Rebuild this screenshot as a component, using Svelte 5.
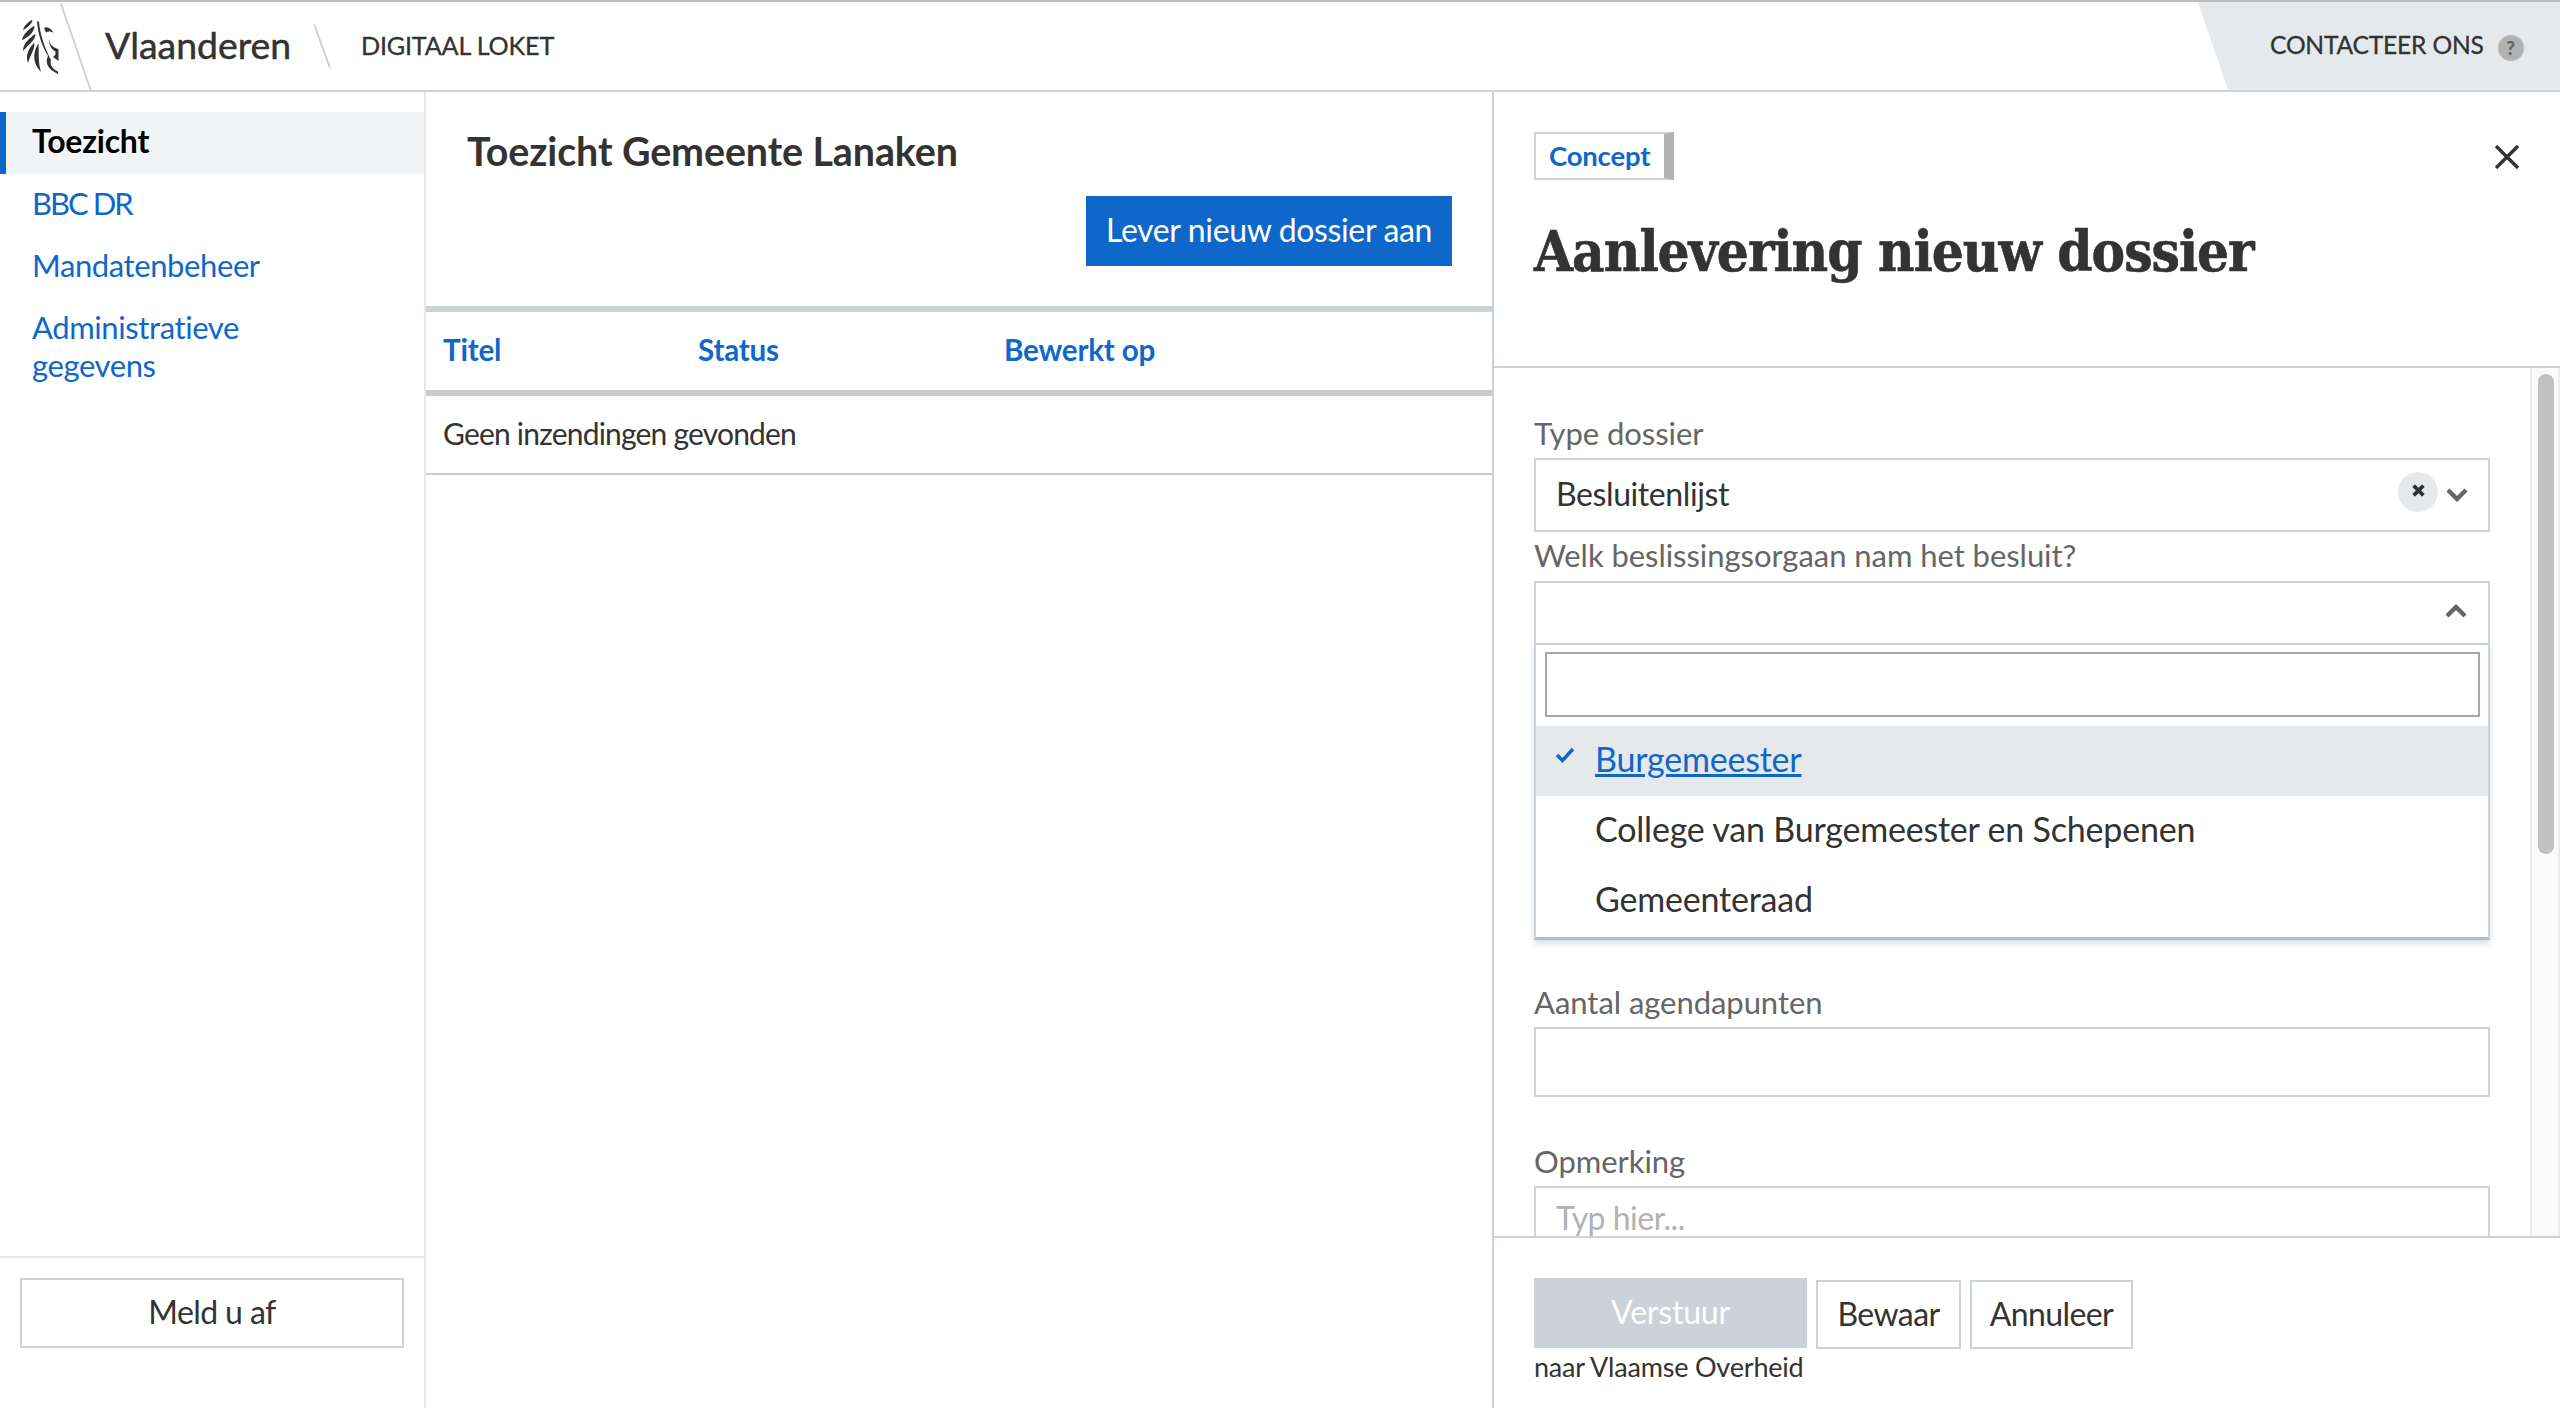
<script>
  const navItems = ["BBC DR", "Mandatenbeheer", "Administratieve gegevens"];
  const columns = ["Titel", "Status", "Bewerkt op"];
  const options = ["College van Burgemeester en Schepenen", "Gemeenteraad"];
</script>

<div class="page">
  <header class="topbar">
    <div class="brand">
      <svg class="lion" viewBox="0 0 50 66" aria-hidden="true">
        <path d="M18 6C14 8 10 12 9 16C13 14 17 11 18.5 7Z" />
        <path d="M20 12C15 15 9 20 8 26C13 24 19 20 20.5 13Z" />
        <path d="M21 20C16 24 9 29 9 37C13 32 20 28 21.5 21Z" />
        <path d="M20 29C15 34 11 41 14 49C16 42 20 37 20.5 30Z" />
        <path d="M24 30C19 38 18 49 27 58C24 48 25 39 24.5 30Z" />
        <path d="M23 7C24 22 29 34 34 42C31 48 33 55 44 60L44 57.5C38 55 35.5 50 37 46C31 35 26 20 25 8Z" />
        <path d="M30 14C33 12 37 14 39.5 19C37 17 34 17 32 18.5Z" />
        <path d="M35 25C36 31 39 33.5 44.5 35L44.5 47L39 43L41.5 40.5L41.5 37.5C37.5 35.5 35 31 35 25Z" />
      </svg>
    </div>
    <span class="wordmark">Vlaanderen</span>
    <span class="slash"></span>
    <span class="app-name">DIGITAAL LOKET</span>
    <div class="contact">
      <span>CONTACTEER ONS</span>
      <span class="help">?</span>
    </div>
  </header>

  <div class="body">
    <nav class="sidebar">
      <ul>
        <li class="active">Toezicht</li>
        {#each navItems as item}
          <li class:caps={item === "BBC DR"}>{item}</li>
        {/each}
      </ul>
      <div class="logout">
        <button class="btn-outline wide">Meld u af</button>
      </div>
    </nav>

    <main class="main">
      <div class="main-head">
        <h2>Toezicht Gemeente Lanaken</h2>
        <button class="btn-primary">Lever nieuw dossier aan</button>
      </div>
      <div class="table-head">
        {#each columns as col}
          <span>{col}</span>
        {/each}
      </div>
      <div class="table-row">Geen inzendingen gevonden</div>
    </main>

    <aside class="panel">
      <div class="panel-head">
        <div class="head-top">
          <span class="tag">Concept</span>
          <svg class="close" viewBox="0 0 24 24" aria-hidden="true"><path d="M1 1L23 23M23 1L1 23" /></svg>
        </div>
        <h1>Aanlevering nieuw dossier</h1>
      </div>

      <div class="panel-scroll">
        <form class="form">
          <label class="first" for="type">Type dossier</label>
          <div class="select" id="type">
            <span>Besluitenlijst</span>
            <span class="clear">
              <svg viewBox="0 0 12 12" aria-hidden="true"><path d="M1.5 1.5L10.5 10.5M10.5 1.5L1.5 10.5" /></svg>
            </span>
            <svg class="chev" viewBox="0 0 22 14" aria-hidden="true"><path d="M2 2L11 11L20 2" /></svg>
          </div>

          <label class="tight" for="organ">Welk beslissingsorgaan nam het besluit?</label>
          <div class="combo">
            <div class="select open" id="organ">
              <svg class="chev up" viewBox="0 0 22 14" aria-hidden="true"><path d="M2 12L11 3L20 12" /></svg>
            </div>
            <div class="dropdown">
              <div class="search-wrap"><div class="search"></div></div>
              <div class="option selected">
                <svg class="check" viewBox="0 0 20 16" aria-hidden="true"><path d="M2 8L7.5 13.5L18 2" /></svg>
                <span>Burgemeester</span>
              </div>
              {#each options as opt}
                <div class="option">{opt}</div>
              {/each}
            </div>
          </div>

          <label class="after-combo" for="count">Aantal agendapunten</label>
          <div class="input" id="count"></div>

          <label class="spaced" for="note">Opmerking</label>
          <div class="input note" id="note">Typ hier...</div>
        </form>
        <div class="track"><div class="thumb"></div></div>
      </div>

      <div class="panel-foot">
        <div class="send">
          <button class="btn-disabled">Verstuur</button>
          <span>naar Vlaamse Overheid</span>
        </div>
        <button class="btn-outline save">Bewaar</button>
        <button class="btn-outline cancel">Annuleer</button>
      </div>
    </aside>
  </div>
</div>

<style>
  :global(body) {
    margin: 0;
    background: #fff;
  }

  .page {
    width: 2560px;
    height: 1408px;
    overflow: hidden;
    display: flex;
    flex-direction: column;
    font-family: Lato, "Open Sans", sans-serif;
    font-size: 32px;
    color: #333332;
    letter-spacing: -0.2px;
  }

  .topbar {
    height: 92px;
    box-sizing: border-box;
    flex: none;
    display: flex;
    align-items: center;
    border-top: 2px solid #bdbdbd;
    border-bottom: 2px solid #cbd2da;
  }

  .brand {
    width: 105px;
    height: 88px;
    flex: none;
    display: flex;
    align-items: center;
    position: relative;
  }

  .brand::after {
    content: "";
    position: absolute;
    left: 75px;
    top: -1px;
    width: 2px;
    height: 93px;
    background: #cbd2da;
    transform: rotate(-19deg);
  }

  .lion {
    width: 50px;
    height: 66px;
    margin-left: 14px;
    margin-top: 2px;
    fill: #333332;
  }

  .wordmark {
    font-size: 37.4px;
    -webkit-text-stroke: 0.5px #333332;
    letter-spacing: 0;
    width: 216px;
    padding-bottom: 3px;
  }

  .slash {
    width: 2px;
    height: 46px;
    background: #cbd2da;
    transform: rotate(-20deg);
    margin-right: 38px;
  }

  .app-name {
    font-size: 25.2px;
    -webkit-text-stroke: 0.3px #333332;
    padding-bottom: 2px;
  }

  .contact {
    margin-left: auto;
    width: 362px;
    height: 100%;
    box-sizing: border-box;
    padding-left: 72px;
    display: flex;
    align-items: center;
    gap: 14px;
    font-size: 24.6px;
    -webkit-text-stroke: 0.3px #333332;
    background: #e6e9ec;
    clip-path: polygon(0 0, 100% 0, 100% 100%, 30px 100%);
  }

  .contact > span:first-child {
    padding-bottom: 4px;
  }

  .help {
    width: 26px;
    height: 26px;
    border-radius: 50%;
    background: #b2b2b2;
    color: #666;
    font-size: 19px;
    font-weight: 900;
    -webkit-text-stroke: 0;
    display: flex;
    align-items: center;
    justify-content: center;
    margin-top: 3px;
  }

  .body {
    flex: 1;
    min-height: 0;
    display: flex;
  }

  .sidebar {
    width: 426px;
    flex: none;
    box-sizing: border-box;
    border-right: 2px solid #e6e9ec;
    display: flex;
    flex-direction: column;
    padding-top: 20px;
  }

  ul {
    list-style: none;
    margin: 0;
    padding: 0;
    flex: 1;
  }

  li {
    padding: 10px 60px 14px 32px;
    line-height: 38px;
    color: #0f67ca;
    font-size: 31px;
    letter-spacing: -0.4px;
  }

  li.caps {
    letter-spacing: -2px;
  }

  li.active {
    background: #f3f4f6;
    color: #000;
    font-weight: 700;
    font-size: 32px;
    letter-spacing: -0.2px;
    box-shadow: inset 6px 0 0 #0f67ca;
  }

  .logout {
    border-top: 2px solid #e6e9ec;
    padding: 20px 20px 60px;
  }

  button {
    font: inherit;
    letter-spacing: inherit;
    margin: 0;
    border-radius: 0;
  }

  .btn-outline {
    background: #fff;
    color: #333332;
    border: 2px solid #cbd2da;
    height: 70px;
    padding: 0 0 3px;
    letter-spacing: -0.6px;
  }

  .wide {
    width: 100%;
    display: block;
  }

  .main {
    width: 1068px;
    flex: none;
    box-sizing: border-box;
    border-right: 2px solid #cbd2da;
  }

  .main-head {
    padding: 36px 40px 40px 41px;
    display: flex;
    flex-direction: column;
    height: 214px;
    box-sizing: border-box;
  }

  h2 {
    margin: 0;
    font-size: 39.4px;
    line-height: 46px;
    font-weight: 700;
    letter-spacing: -0.1px;
  }

  .btn-primary {
    align-self: flex-end;
    margin-top: 22px;
    width: 366px;
    height: 70px;
    background: #0f67ca;
    color: #fff;
    border: 0;
    padding: 0 0 3px;
    letter-spacing: -0.35px;
  }

  .table-head {
    border-top: 6px solid #cbd2da;
    border-bottom: 6px solid #cbcbcb;
    height: 78px;
    box-sizing: content-box;
    display: grid;
    grid-template-columns: 255px 306px 1fr;
    align-items: center;
    padding-left: 17px;
    font-weight: 700;
    font-size: 29.6px;
    color: #0f67ca;
  }

  .table-head span {
    padding-bottom: 3px;
  }

  .table-row {
    height: 79px;
    box-sizing: border-box;
    display: flex;
    align-items: center;
    padding: 0 0 3px 17px;
    border-bottom: 2px solid #cbcbcb;
    font-size: 30px;
    letter-spacing: -0.8px;
  }

  .panel {
    flex: 1;
    min-width: 0;
    display: flex;
    flex-direction: column;
  }

  .panel-head {
    height: 276px;
    flex: none;
    box-sizing: border-box;
    border-bottom: 2px solid #cbd2da;
    padding: 40px 0 0 40px;
  }

  .head-top {
    display: flex;
    align-items: center;
    justify-content: space-between;
    padding-right: 41px;
  }

  .tag {
    box-sizing: border-box;
    height: 48px;
    width: 140px;
    border: 2px solid #cbd2da;
    border-right: 10px solid #b2b2b2;
    color: #0f67ca;
    font-size: 27.5px;
    font-weight: 700;
    display: flex;
    align-items: center;
    padding-left: 13px;
    padding-bottom: 2px;
  }

  .close {
    width: 24px;
    height: 24px;
    fill: none;
    stroke: #333332;
    stroke-width: 3.4;
    margin-top: 2px;
  }

  h1 {
    margin: 35px 0 0;
    font-family: "DejaVu Serif", serif;
    font-stretch: condensed;
    font-size: 56px;
    line-height: 72px;
    font-weight: 700;
    letter-spacing: -1px;
    -webkit-text-stroke: 0.6px #333332;
  }

  .panel-scroll {
    flex: 1;
    min-height: 0;
    display: flex;
    overflow: hidden;
  }

  .form {
    width: 956px;
    margin-left: 40px;
    flex: none;
  }

  label {
    display: block;
    color: #666;
    font-size: 31px;
    line-height: 40px;
    letter-spacing: -0.05px;
  }

  .first {
    margin-top: 45px;
    margin-bottom: 5px;
  }

  .tight {
    margin-top: 3px;
    margin-bottom: 6px;
  }

  .after-combo {
    margin-bottom: 5px;
  }

  .spaced {
    margin-top: 44px;
    margin-bottom: 5px;
  }

  .select {
    box-sizing: border-box;
    height: 74px;
    border: 2px solid #cbd2da;
    display: flex;
    align-items: center;
    padding: 0 0 4px 20px;
    letter-spacing: -0.4px;
    position: relative;
  }

  .select.open {
    height: 64px;
  }

  .clear {
    position: absolute;
    right: 50px;
    top: 12px;
    width: 40px;
    height: 40px;
    border-radius: 50%;
    background: #e6e9ec;
    display: flex;
    align-items: center;
    justify-content: center;
  }

  .clear svg {
    width: 13px;
    height: 13px;
    fill: none;
    stroke: #333332;
    stroke-width: 3.4;
    margin-top: -3px;
  }

  .chev {
    position: absolute;
    right: 20px;
    top: 28px;
    width: 22px;
    height: 14px;
    fill: none;
    stroke: #666;
    stroke-width: 4.4;
  }

  .chev.up {
    top: 21px;
    right: 21px;
  }

  .combo {
    height: 401px;
    position: relative;
  }

  .dropdown {
    position: absolute;
    left: 0;
    right: 0;
    top: 62px;
    height: 297px;
    box-sizing: border-box;
    background: #fff;
    border: 2px solid #cbd2da;
    border-bottom: 3px solid #b5bec9;
    box-shadow: 0 3px 6px rgba(140, 152, 168, 0.35);
  }

  .search-wrap {
    padding: 7px 8px 9px 9px;
  }

  .search {
    height: 65px;
    box-sizing: border-box;
    border: 2px solid #a8a8a8;
  }

  .option {
    height: 70px;
    box-sizing: border-box;
    display: flex;
    align-items: center;
    padding: 0 0 5px 59px;
    position: relative;
    font-size: 34px;
    letter-spacing: -0.2px;
  }

  .option.selected {
    background: #e6e9ec;
    color: #0f67ca;
    text-decoration: underline;
  }

  .check {
    position: absolute;
    left: 19px;
    top: 21px;
    width: 20px;
    height: 16px;
    fill: none;
    stroke: #0f67ca;
    stroke-width: 3.4;
  }

  .input {
    box-sizing: border-box;
    height: 70px;
    border: 2px solid #cbd2da;
  }

  .note {
    height: 100px;
    padding: 11px 20px;
    color: #b2b2b2;
    line-height: 38px;
    letter-spacing: -0.5px;
  }

  .track {
    margin-left: 40px;
    width: 30px;
    box-sizing: border-box;
    background: #fafafa;
    border-left: 2px solid #ebebeb;
    border-right: 2px solid #ebebeb;
    padding: 6px 4px 0 6px;
  }

  .thumb {
    height: 480px;
    background: #c1c1c1;
    border-radius: 8px;
  }

  .panel-foot {
    height: 172px;
    flex: none;
    box-sizing: border-box;
    border-top: 2px solid #cbd2da;
    padding: 40px 0 0 40px;
    display: flex;
    align-items: flex-start;
    gap: 9px;
  }

  .send {
    width: 273px;
    display: flex;
    flex-direction: column;
    font-size: 27px;
    line-height: 32px;
    white-space: nowrap;
  }

  .btn-disabled {
    height: 70px;
    background: #cbd2da;
    color: #fff;
    border: 0;
    padding: 0 0 3px;
    font-size: 32px;
    margin-bottom: 3px;
  }

  .save {
    margin-top: 2px;
    height: 69px;
    width: 145px;
  }

  .cancel {
    margin-top: 2px;
    height: 69px;
    width: 163px;
  }
</style>
